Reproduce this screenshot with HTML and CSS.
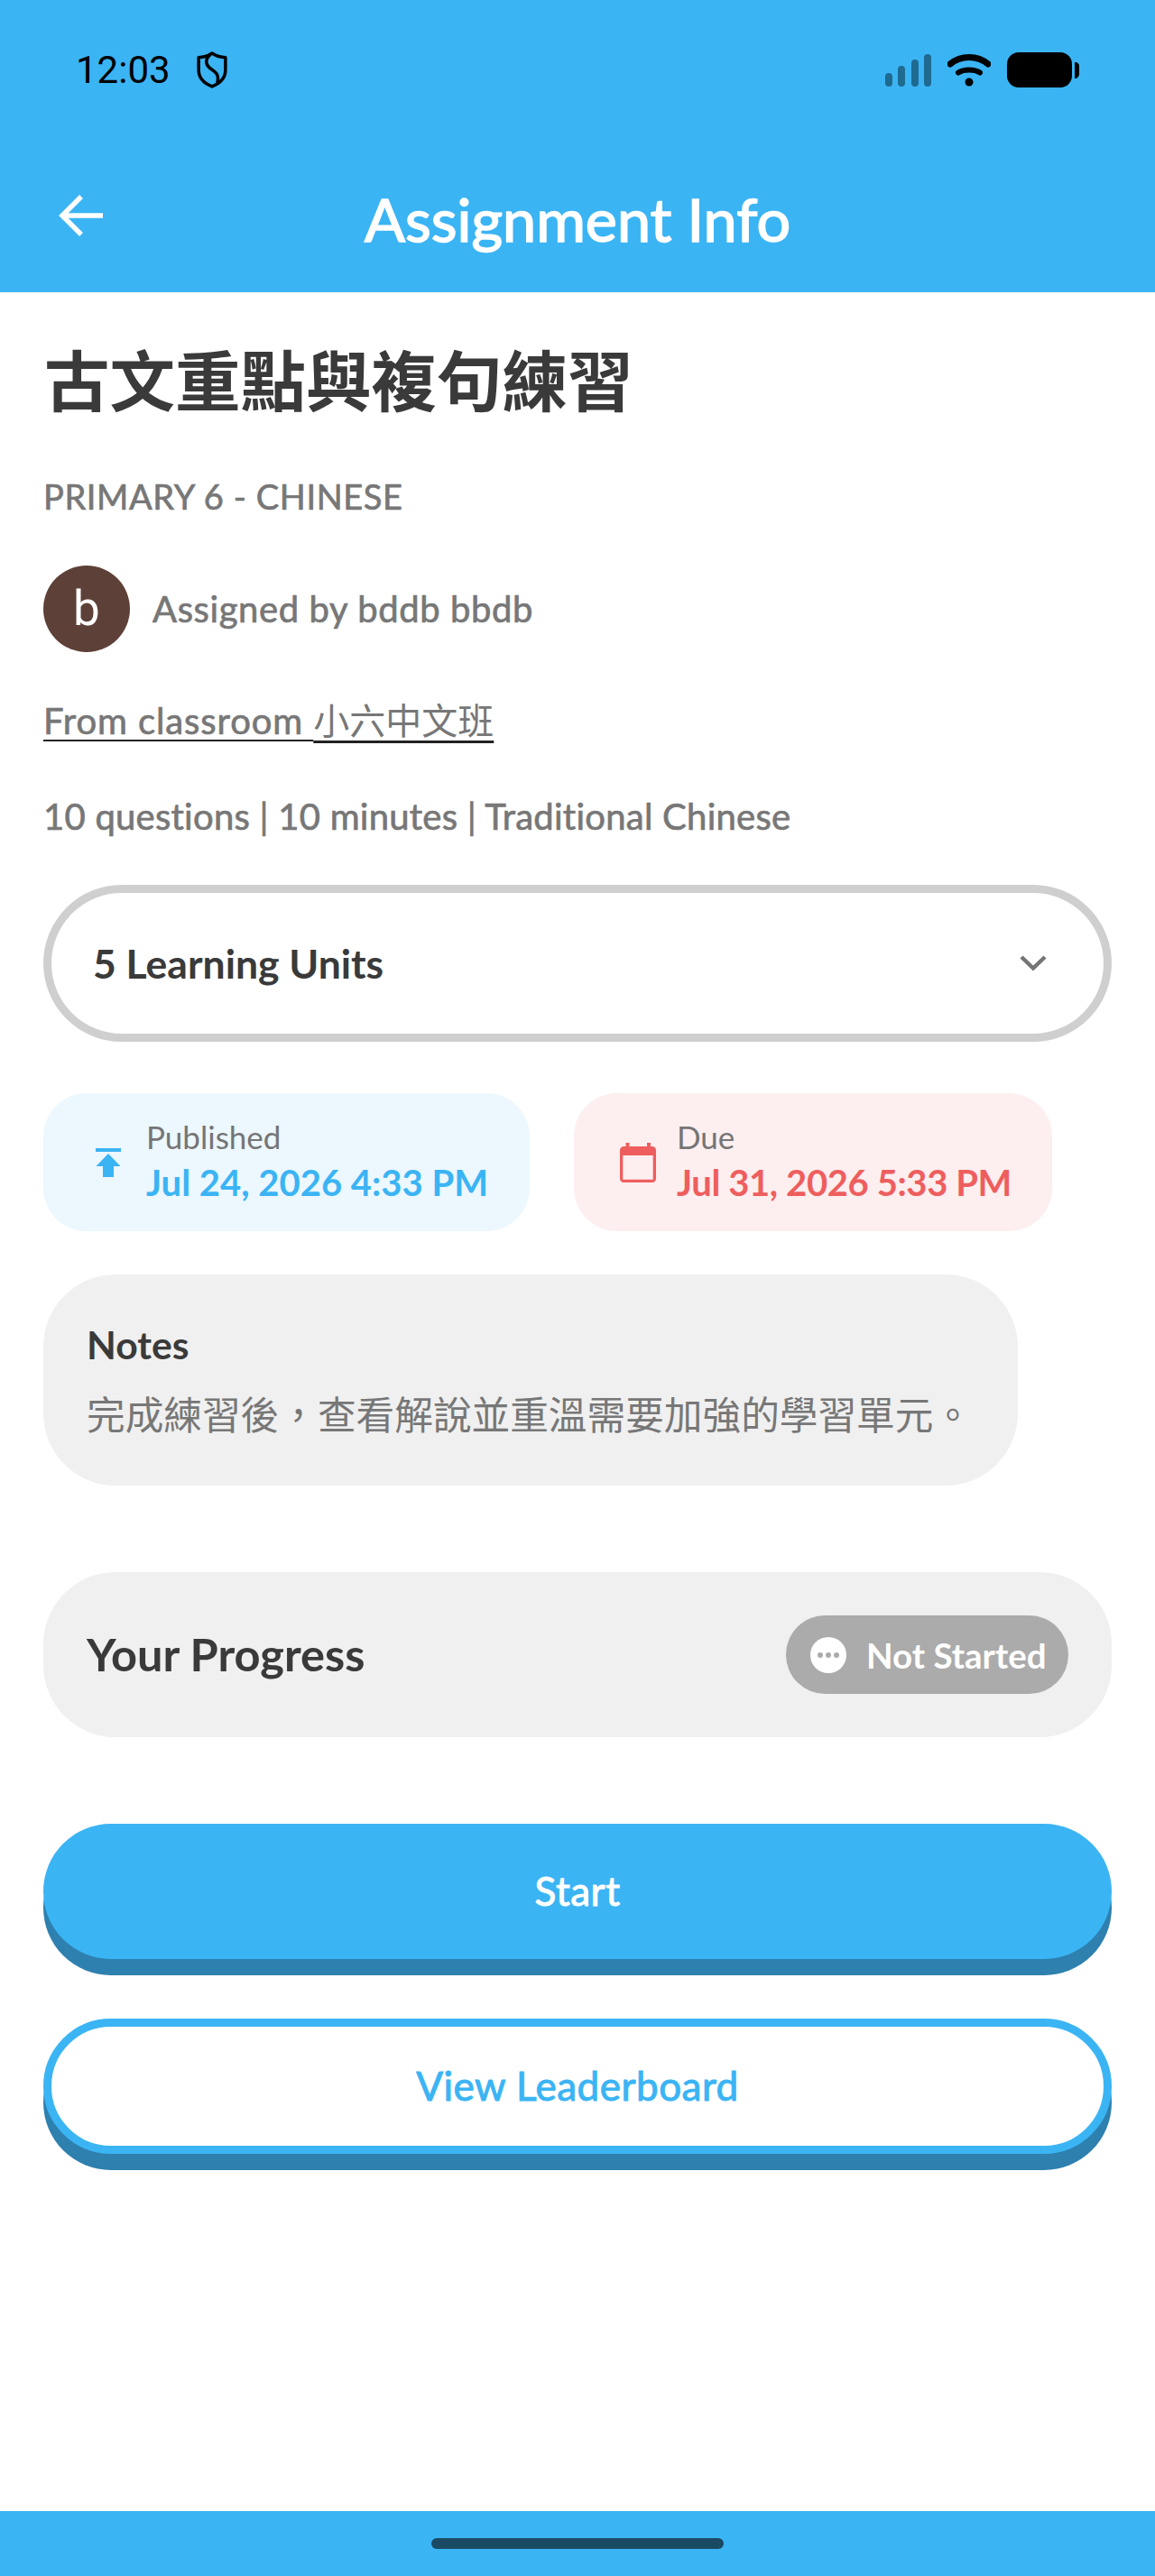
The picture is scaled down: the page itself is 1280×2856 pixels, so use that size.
FILE: index.html
```html
<!DOCTYPE html>
<html lang="en">
<head>
    <meta charset="UTF-8">
    <meta name="viewport" content="width=device-width, initial-scale=1.0">
    <title>Assignment Info</title>
    <link rel="stylesheet" href="styles.css">
</head>
<body>
    <div class="phone">
        <header class="appbar">
            <div class="statusbar">
                <div class="status-left">
                    <span class="clock">12:03</span>
                    <svg class="shield" width="34" height="41" viewBox="0 0 33 40" fill="none" stroke="#000" stroke-width="3.4" stroke-linejoin="round">
                        <path d="M16.5 2C21 5 26 6.5 31 6.500V20C31 29 24 35 16.500 38C9 35 2 29 2 20V6.500C7 6.500 12 5 16.500 2Z"/>
                        <path d="M15 3C9 8 9 14 14 18C20 22 25 25 22 34"/>
                    </svg>
                </div>
                <div class="status-right">
                    <svg width="51" height="36" viewBox="0 0 51 36" fill="#1f6a90">
                        <rect x="0" y="21" width="8" height="15" rx="4"/>
                        <rect x="14" y="13" width="8" height="23" rx="4"/>
                        <rect x="29" y="6" width="8" height="30" rx="4"/>
                        <rect x="43" y="0" width="8" height="36" rx="4"/>
                    </svg>
                    <svg width="48" height="36" viewBox="0 0 48 36" fill="none" stroke="#000" stroke-linecap="round">
                        <path d="M3 11C15 1 33 1 45 11" stroke-width="7"/>
                        <path d="M12 20.500C18 16.500 30 16.500 36 20.500" stroke-width="6"/>
                        <circle cx="24" cy="31" r="4.500" fill="#000" stroke="none"/>
                    </svg>
                    <svg width="80" height="39" viewBox="0 0 80 39" fill="#000">
                        <rect x="0" y="0" width="72" height="39" rx="13"/>
                        <path d="M75 11H76C78 11 80 13 80 15V24C80 26 78 29 76 29H75Z"/>
                    </svg>
                </div>
            </div>
            <div class="toolbar">
                <svg class="back" width="49" height="46" viewBox="0 0 49 46" fill="none" stroke="#fff" stroke-width="5.500">
                    <path d="M49 23H5"/>
                    <path d="M25 2L4 23L25 44"/>
                </svg>
                <h2 class="toolbar-title">Assignment Info</h2>
            </div>
        </header>

        <main class="content">
            <h1 class="title">古文重點與複句練習</h1>
            <div class="subject">PRIMARY 6 - CHINESE</div>
            <div class="owner">
                <div class="avatar">b</div>
                <span class="owner-name">Assigned by bddb bbdb</span>
            </div>
            <div class="classroom"><span class="link-latin">From classroom </span><span class="link-cjk">小六中文班</span></div>
            <div class="meta">10 questions | 10 minutes | Traditional Chinese</div>

            <div class="units">
                <span class="units-label">5 Learning Units</span>
                <svg width="30" height="19" viewBox="0 0 30 19" fill="none" stroke="#757575" stroke-width="4.500">
                    <path d="M2 3L15 15.500L28 3"/>
                </svg>
            </div>

            <div class="dates">
                <div class="date-card published">
                    <svg width="28" height="32" viewBox="0 0 28 32" fill="#3bb4f4">
                        <rect x="0" y="0" width="28" height="4"/>
                        <path d="M14 6L27.500 20H20V32H8V20H0.500Z"/>
                    </svg>
                    <div class="date-text">
                        <div class="date-label">Published</div>
                        <div class="date-value">Jul 24, 2026 4:33 PM</div>
                    </div>
                </div>
                <div class="date-card due">
                    <svg width="40" height="44" viewBox="0 0 40 44" fill="#ee5e5e">
                        <rect x="6.500" y="0" width="4" height="6"/>
                        <rect x="30" y="0" width="4" height="6"/>
                        <path fill-rule="evenodd" d="M4 4H36C38 4 40 6 40 8V40C40 42 38 44 36 44H4C2 44 0 42 0 40V8C0 6 2 4 4 4ZM3.300 14V40.700H36.700V14Z"/>
                    </svg>
                    <div class="date-text">
                        <div class="date-label">Due</div>
                        <div class="date-value">Jul 31, 2026 5:33 PM</div>
                    </div>
                </div>
            </div>

            <div class="notes">
                <div class="notes-title">Notes</div>
                <div class="notes-body">完成練習後，查看解說並重溫需要加強的學習單元。</div>
            </div>

            <div class="progress">
                <span class="progress-title">Your Progress</span>
                <div class="pill">
                    <span class="pill-icon"><i></i><i></i><i></i></span>
                    <span class="pill-text">Not Started</span>
                </div>
            </div>

            <button class="btn btn-start">Start</button>
            <button class="btn btn-board">View Leaderboard</button>
        </main>

        <div class="navbar"><span class="handle"></span></div>
    </div>
</body>
</html>
```

FILE: styles.css
```css
* {
    margin: 0;
    padding: 0;
    box-sizing: border-box;
}
body {
    background: #fff;
    font-family: "Lato", "Noto Sans CJK TC", sans-serif;
    color: #777;
}
.phone {
    width: 1280px;
    height: 2856px;
    display: flex;
    flex-direction: column;
    overflow: hidden;
}

/* top bar */
.appbar {
    height: 324px;
    background: #3bb4f4;
    flex-shrink: 0;
}
.statusbar {
    height: 155px;
    padding: 0 84px 0 84px;
    display: flex;
    justify-content: space-between;
    align-items: center;
}
.status-left {
    display: flex;
    align-items: center;
    gap: 29px;
}
.clock {
    font-family: "Roboto", sans-serif;
    font-size: 42px;
    color: #000;
}
.status-right {
    display: flex;
    align-items: center;
    gap: 18px;
}
.toolbar {
    height: 169px;
    padding: 0 65px;
    position: relative;
    display: flex;
    align-items: center;
}
.back {
    position: absolute;
    left: 65px;
    top: 61px;
}
.toolbar-title {
    width: 100%;
    text-align: center;
    font-size: 66.500px;
    font-weight: 400;
    -webkit-text-stroke: 1.6px #fff;
    line-height: 80px;
    color: #fff;
    padding-top: 4px;
}

/* main */
.content {
    flex: 1;
    padding: 0 48px;
    display: flex;
    flex-direction: column;
}
.title {
    margin-top: 47px;
    margin-left: 1px;
    font-family: "Noto Sans CJK TC", sans-serif;
    font-size: 72.500px;
    font-weight: 700;
    line-height: 96px;
    color: #3a3a3a;
}
.subject {
    margin-top: 58px;
    font-size: 38px;
    -webkit-text-stroke: 0.7px #777;
    letter-spacing: 0.6px;
    line-height: 50px;
}
.owner {
    margin-top: 51px;
    height: 97px;
    display: flex;
    align-items: center;
    gap: 25px;
}
.avatar {
    width: 96px;
    height: 96px;
    border-radius: 50%;
    background: #5d4037;
    color: #fff;
    font-family: "Roboto", sans-serif;
    font-size: 53px;
    display: flex;
    align-items: center;
    justify-content: center;
}
.owner-name {
    font-size: 40px;
    -webkit-text-stroke: 0.7px #777;
    letter-spacing: 0.6px;
}
.classroom {
    margin-top: 44px;
    font-size: 40px;
    line-height: 60px;
}
.link-latin {
    white-space: pre;
    letter-spacing: 0.9px;
    -webkit-text-stroke: 0.7px #777;
    text-decoration: underline #222 2px;
    text-underline-offset: 6px;
}
.link-cjk {
    font-family: "Noto Sans CJK TC", sans-serif;
    font-weight: 400;
    font-size: 40px;
    text-decoration: underline #222 3px;
    text-underline-offset: 7px;
}
.meta {
    margin-top: 51px;
    font-size: 40px;
    -webkit-text-stroke: 0.7px #777;
    letter-spacing: 0.25px;
    line-height: 50px;
}
.units {
    margin-top: 51px;
    height: 174px;
    border: 9px solid #cfcfcf;
    border-radius: 87px;
    padding: 0 63px 2px 46px;
    display: flex;
    justify-content: space-between;
    align-items: center;
}
.units-label {
    font-size: 44.500px;
    font-weight: 700;
    color: #3a3a3a;
}
.dates {
    margin-top: 57px;
    display: flex;
    gap: 49px;
}
.date-card {
    height: 153px;
    border-radius: 48px;
    padding-bottom: 5px;
    display: flex;
    align-items: center;
}
.published {
    width: 539px;
    background: #ecf7fe;
    padding-left: 58px;
    gap: 28px;
}
.due {
    width: 530px;
    background: #fdeeef;
    padding-left: 51px;
    gap: 23px;
}
.date-card svg {
    margin-top: 5px;
}
.date-label {
    font-size: 35px;
    line-height: 50px;
    color: #757575;
}
.date-value {
    font-size: 40px;
    font-weight: 700;
    line-height: 52px;
}
.published .date-value {
    color: #3bb4f4;
}
.due .date-value {
    color: #ee5e5e;
    letter-spacing: -0.4px;
}
.notes {
    margin-top: 48px;
    width: 1080px;
    height: 234px;
    border-radius: 80px;
    background: #f0f0f0;
    padding: 50px 48px 0;
}
.notes-title {
    font-size: 42.670px;
    font-weight: 700;
    line-height: 56px;
    color: #3a3a3a;
}
.notes-body {
    margin-top: 20px;
    font-family: "Noto Sans CJK TC", sans-serif;
    font-size: 42.670px;
    line-height: 56px;
    color: #777;
}
.progress {
    margin-top: 96px;
    height: 183px;
    border-radius: 80px;
    background: #f0f0f0;
    padding: 0 48px;
    display: flex;
    justify-content: space-between;
    align-items: center;
}
.progress-title {
    font-size: 50.500px;
    font-weight: 700;
    color: #3a3a3a;
    padding-bottom: 3px;
}
.pill {
    width: 313px;
    height: 87px;
    border-radius: 44px;
    background: #ababab;
    padding-left: 27px;
    display: flex;
    align-items: center;
    gap: 22px;
}
.pill-icon {
    width: 40px;
    height: 40px;
    border-radius: 50%;
    background: #fff;
    display: flex;
    justify-content: center;
    align-items: center;
    gap: 3px;
}
.pill-icon i {
    width: 6px;
    height: 6px;
    border-radius: 50%;
    background: #ababab;
}
.pill-text {
    font-size: 38.500px;
    font-weight: 700;
    color: #fff;
}
.btn {
    width: 100%;
    height: 150px;
    border-radius: 75px;
    font-family: inherit;
    font-size: 44px;
    letter-spacing: 0.5px;
    -webkit-text-stroke: 1px;
    padding-bottom: 2px;
    box-shadow: 0 18px 0 #2e80ae;
}
.btn-start {
    margin-top: 96px;
    background: #3bb4f4;
    border: none;
    color: #fff;
}
.btn-board {
    margin-top: 66px;
    background: #fff;
    border: 9px solid #3bb4f4;
    color: #3bb4f4;
}

/* bottom bar */
.navbar {
    height: 72px;
    flex-shrink: 0;
    background: #3bb4f4;
    display: flex;
    justify-content: center;
    padding-top: 30px;
}
.handle {
    width: 324px;
    height: 12px;
    border-radius: 6px;
    background: #1a4a63;
}
```
